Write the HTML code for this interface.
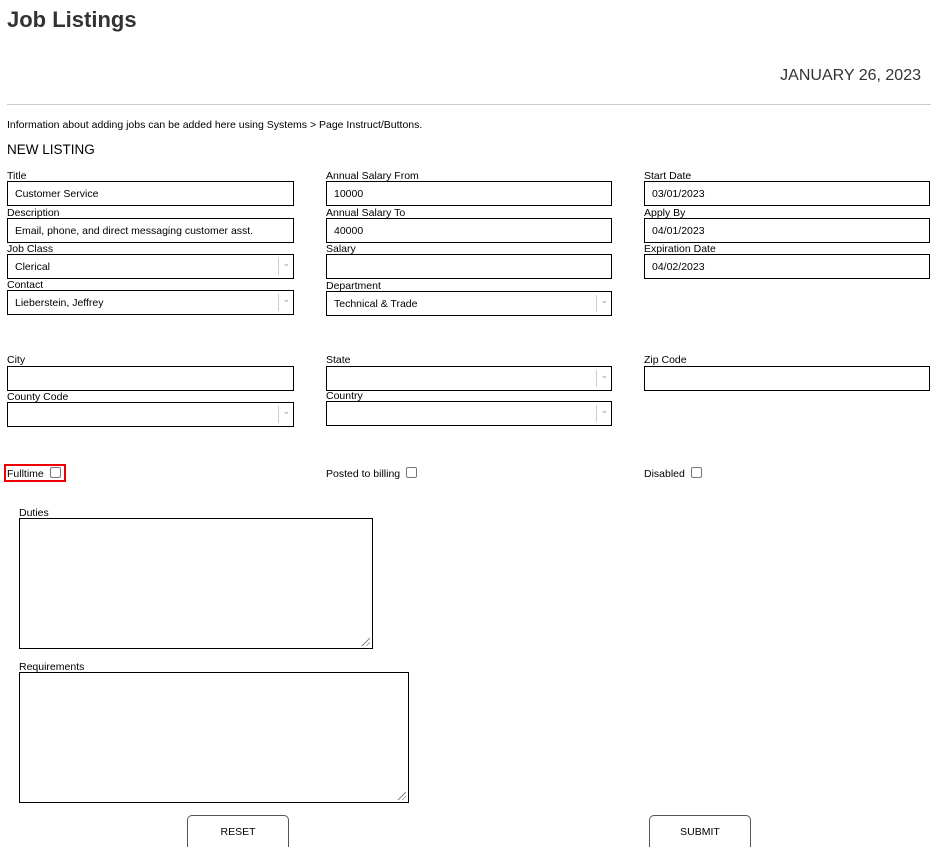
<!DOCTYPE html>
<html><head><style>
body{margin:0;width:936px;height:845px;overflow:hidden;background:#fff;font-family:"Liberation Sans",Arial,sans-serif;color:#000;position:relative}
.a{position:absolute}
.l{position:absolute;font-size:10.5px;line-height:11px;margin-top:1px}
.i{position:absolute;border:1px solid #000;box-sizing:border-box;height:25px;font-size:10.5px;padding-left:7px;line-height:25px;background:#fff}
.s:after{content:"";position:absolute;right:0;top:3px;bottom:3px;width:14px;border-left:1px solid #ccc}
.s:before{content:"⌄";position:absolute;right:3px;top:-4px;font-size:9px;color:#999}
.cb{display:inline-block;width:9px;height:9px;border:1px solid #777;border-radius:2px;vertical-align:-1px;margin-left:6px}
.ta{position:absolute;border:1px solid #000;box-sizing:border-box}
.ta:after{content:"";position:absolute;right:2px;bottom:2px;width:10px;height:10px;background:repeating-linear-gradient(135deg,transparent 0 2px,#888 2px 3px);clip-path:polygon(100% 0,100% 100%,0 100%)}
.b{position:absolute;border:1px solid #555;border-bottom:none;border-radius:5px 5px 0 0;box-sizing:border-box;height:32px;width:102px;font-size:10.5px;text-align:center;line-height:32px;top:815px}
</style></head><body>
<div class="a" style="left:7px;top:7px;font-size:22px;font-weight:bold;color:#333">Job Listings</div>
<div class="a" style="right:15px;top:67px;font-size:16px;color:#333">JANUARY 26, 2023</div>
<div class="a" style="left:7px;top:104px;width:924px;height:1px;background:#ccc"></div>
<div class="l" style="left:7px;top:119px">Information about adding jobs can be added here using Systems &gt; Page Instruct/Buttons.</div>
<div class="a" style="left:7px;top:142px;font-size:13.5px">NEW LISTING</div>

<div class="l" style="left:7px;top:170px">Title</div>
<div class="i" style="left:7px;top:181px;width:287px">Customer Service</div>
<div class="l" style="left:7px;top:207px">Description</div>
<div class="i" style="left:7px;top:218px;width:287px">Email, phone, and direct messaging customer asst.</div>
<div class="l" style="left:7px;top:243px">Job Class</div>
<div class="i s" style="left:7px;top:254px;width:287px">Clerical</div>
<div class="l" style="left:7px;top:279px">Contact</div>
<div class="i s" style="left:7px;top:290px;width:287px">Lieberstein, Jeffrey</div>

<div class="l" style="left:326px;top:170px">Annual Salary From</div>
<div class="i" style="left:326px;top:181px;width:286px">10000</div>
<div class="l" style="left:326px;top:207px">Annual Salary To</div>
<div class="i" style="left:326px;top:218px;width:286px">40000</div>
<div class="l" style="left:326px;top:243px">Salary</div>
<div class="i" style="left:326px;top:254px;width:286px"></div>
<div class="l" style="left:326px;top:280px">Department</div>
<div class="i s" style="left:326px;top:291px;width:286px">Technical &amp; Trade</div>

<div class="l" style="left:644px;top:170px">Start Date</div>
<div class="i" style="left:644px;top:181px;width:286px">03/01/2023</div>
<div class="l" style="left:644px;top:207px">Apply By</div>
<div class="i" style="left:644px;top:218px;width:286px">04/01/2023</div>
<div class="l" style="left:644px;top:243px">Expiration Date</div>
<div class="i" style="left:644px;top:254px;width:286px">04/02/2023</div>

<div class="l" style="left:7px;top:354px">City</div>
<div class="i" style="left:7px;top:366px;width:287px"></div>
<div class="l" style="left:7px;top:391px">County Code</div>
<div class="i s" style="left:7px;top:402px;width:287px"></div>
<div class="l" style="left:326px;top:354px">State</div>
<div class="i s" style="left:326px;top:366px;width:286px"></div>
<div class="l" style="left:326px;top:390px">Country</div>
<div class="i s" style="left:326px;top:401px;width:286px"></div>
<div class="l" style="left:644px;top:354px">Zip Code</div>
<div class="i" style="left:644px;top:366px;width:286px"></div>

<div class="a" style="left:4px;top:464px;width:62px;height:18px;border:2px solid #e00;box-sizing:border-box"></div>
<div class="l" style="left:7px;top:466px">Fulltime<span class="cb"></span></div>
<div class="l" style="left:326px;top:466px">Posted to billing<span class="cb"></span></div>
<div class="l" style="left:644px;top:466px">Disabled<span class="cb"></span></div>

<div class="l" style="left:19px;top:507px">Duties</div>
<div class="ta" style="left:19px;top:518px;width:354px;height:131px"></div>
<div class="l" style="left:19px;top:661px">Requirements</div>
<div class="ta" style="left:19px;top:672px;width:390px;height:131px"></div>

<div class="b" style="left:187px">RESET</div>
<div class="b" style="left:649px">SUBMIT</div>
</body></html>
